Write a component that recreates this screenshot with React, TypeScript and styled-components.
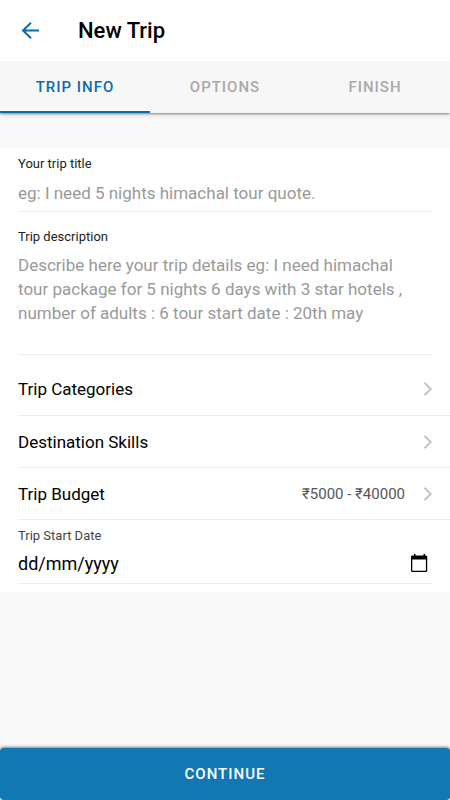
import React from "react";
import styled, { createGlobalStyle } from "styled-components";

const GlobalStyle = createGlobalStyle`
  *, *::before, *::after { box-sizing: border-box; }
  body {
    margin: 0;
    background: #f9f9f9;
    color: #000;
    font-family: Roboto, "Noto Sans", sans-serif;
  }
  button, input, textarea {
    font-family: inherit;
    margin: 0;
    border: 0;
    padding: 0;
    background: none;
    color: inherit;
  }
  button { cursor: pointer; }
`;

const Page = styled.div`
  min-height: 100vh;
  display: flex;
  flex-direction: column;
`;

const Header = styled.header`
  position: relative;
  z-index: 1;
  display: flex;
  align-items: center;
  gap: 35px;
  height: 61px;
  padding: 0 18px;
  background: #fff;
`;

const BackButton = styled.button`
  display: flex;
  width: 25px;
  height: 25px;
  color: #0a6cae;
`;

const Title = styled.h1`
  margin: 0;
  font-size: 22px;
  line-height: 28px;
  font-weight: 500;
`;

const Tabs = styled.nav`
  display: grid;
  grid-template-columns: repeat(3, 1fr);
  background: #f7f7f7;
  box-shadow: 0 1px 2px rgba(0, 0, 0, 0.4), 0 2px 6px rgba(0, 0, 0, 0.12);
`;

const Tab = styled.button<{ $active?: boolean }>`
  height: 52px;
  padding-top: 2px;
  border-bottom: 2px solid ${(p) => (p.$active ? "#0a6cae" : "transparent")};
  color: ${(p) => (p.$active ? "#0a6cae" : "#a9a9a9")};
  font-size: 15px;
  font-weight: 500;
  letter-spacing: 1px;
`;

const Form = styled.form`
  flex: 1;
  display: flex;
  flex-direction: column;
`;

const List = styled.div`
  margin-top: 35px;
  padding-bottom: 8px;
  background: #fff;
`;

const Field = styled.div`
  display: flex;
  flex-direction: column;
  gap: 8px;
  margin: 0 18px;
  border-bottom: 1px solid #ededed;
`;

const TextField = styled(Field)`
  padding: 8px 0 6px;
`;

const AreaField = styled(Field)`
  padding: 17px 0 6px;
`;

const DateField = styled(Field)`
  padding: 8px 0;
  gap: 7px;
`;

const Label = styled.label<{ $soft?: boolean }>`
  font-size: 13px;
  line-height: 16px;
  color: ${(p) => (p.$soft ? "#444" : "#222")};
`;

const TextInput = styled.input`
  width: 100%;
  height: 25px;
  font-size: 17px;
  outline: none;
  &::placeholder { color: #999; opacity: 1; }
`;

const TextArea = styled.textarea`
  width: 100%;
  height: 95px;
  padding-right: 12px;
  font-size: 17px;
  line-height: 24px;
  resize: none;
  outline: none;
  &::placeholder { color: #999; opacity: 1; }
`;

const DateRow = styled.div`
  display: flex;
  align-items: center;
  height: 24px;
  padding-right: 3px;
`;

const DateInput = styled(TextInput)`
  flex: 1;
  min-width: 0;
  font-size: 18px;
  &::placeholder { color: #000; }
`;

const CalendarButton = styled.button`
  display: flex;
  width: 20px;
  height: 20px;
`;

const Row = styled.button<{ $first?: boolean }>`
  display: flex;
  align-items: center;
  width: calc(100% - 18px);
  height: ${(p) => (p.$first ? 61 : 52)}px;
  margin-left: 18px;
  padding: ${(p) => (p.$first ? 8 : 0)}px 16px 0 0;
  border-bottom: 1px solid #ededed;
  text-align: left;
`;

const RowName = styled.span`
  flex: 1;
  font-size: 17px;
  line-height: 24px;
`;

const RowValue = styled.span`
  margin-right: 17px;
  font-size: 15px;
  line-height: 24px;
  color: #555;
`;

const Footer = styled.footer`
  margin-top: auto;
`;

const Continue = styled.button`
  width: 100%;
  height: 52px;
  border-radius: 4px;
  background: #1278b3;
  box-shadow: 0 -1px 3px rgba(0, 0, 0, 0.5);
  color: #fff;
  font-size: 15px;
  font-weight: 500;
  letter-spacing: 1px;
`;

const BackArrow = () => (
  <svg width="25" height="25" viewBox="0 0 25 25" fill="none" stroke="currentColor" strokeWidth="2" aria-hidden="true">
    <path d="M21 12.5H5.2M13 4.7 5 12.5l8 7.8" />
  </svg>
);

const Chevron = () => (
  <svg width="12" height="16" viewBox="0 0 12 16" fill="none" stroke="#c4c4c4" strokeWidth="2" aria-hidden="true">
    <path d="M2.5 1.8 8.7 8l-6.2 6.2" />
  </svg>
);

const CalendarIcon = () => (
  <svg width="20" height="20" viewBox="0 0 20 20" aria-hidden="true">
    <path
      fill="#000"
      fillRule="evenodd"
      d="M5 1h1.5v1.5h8V1H16v1.5h1a1.2 1.2 0 0 1 1.2 1.2v14.1A1.2 1.2 0 0 1 17 19H3.200A1.2 1.2 0 0 1 2 17.800V3.700a1.2 1.2 0 0 1 1.2-1.2H5zM3.300 6.500v11.200h13.600V6.500z"
    />
  </svg>
);

const tabs = ["TRIP INFO", "OPTIONS", "FINISH"];

const rows = [
  { name: "Trip Categories" },
  { name: "Destination Skills" },
  { name: "Trip Budget", value: "₹5000 - ₹40000" },
];

export default function App() {
  return (
    <Page>
      <GlobalStyle />
      <Header>
        <BackButton type="button" aria-label="Back">
          <BackArrow />
        </BackButton>
        <Title>New Trip</Title>
      </Header>
      <Tabs>
        {tabs.map((name, i) => (
          <Tab key={name} type="button" $active={i === 0}>
            {name}
          </Tab>
        ))}
      </Tabs>
      <Form onSubmit={(e) => e.preventDefault()}>
        <List>
          <TextField>
            <Label htmlFor="title">Your trip title</Label>
            <TextInput id="title" placeholder="eg: I need 5 nights himachal tour quote." />
          </TextField>
          <AreaField>
            <Label htmlFor="description">Trip description</Label>
            <TextArea
              id="description"
              placeholder="Describe here your trip details eg: I need himachal tour package for 5 nights 6 days with 3 star hotels , number of adults : 6 tour start date : 20th may"
            />
          </AreaField>
          {rows.map((row, i) => (
            <Row key={row.name} type="button" $first={i === 0}>
              <RowName>{row.name}</RowName>
              {row.value && <RowValue>{row.value}</RowValue>}
              <Chevron />
            </Row>
          ))}
          <DateField>
            <Label htmlFor="start" $soft>
              Trip Start Date
            </Label>
            <DateRow>
              <DateInput id="start" inputMode="numeric" placeholder="dd/mm/yyyy" />
              <CalendarButton type="button" aria-label="Choose date">
                <CalendarIcon />
              </CalendarButton>
            </DateRow>
          </DateField>
        </List>
        <Footer>
          <Continue type="submit">CONTINUE</Continue>
        </Footer>
      </Form>
    </Page>
  );
}
